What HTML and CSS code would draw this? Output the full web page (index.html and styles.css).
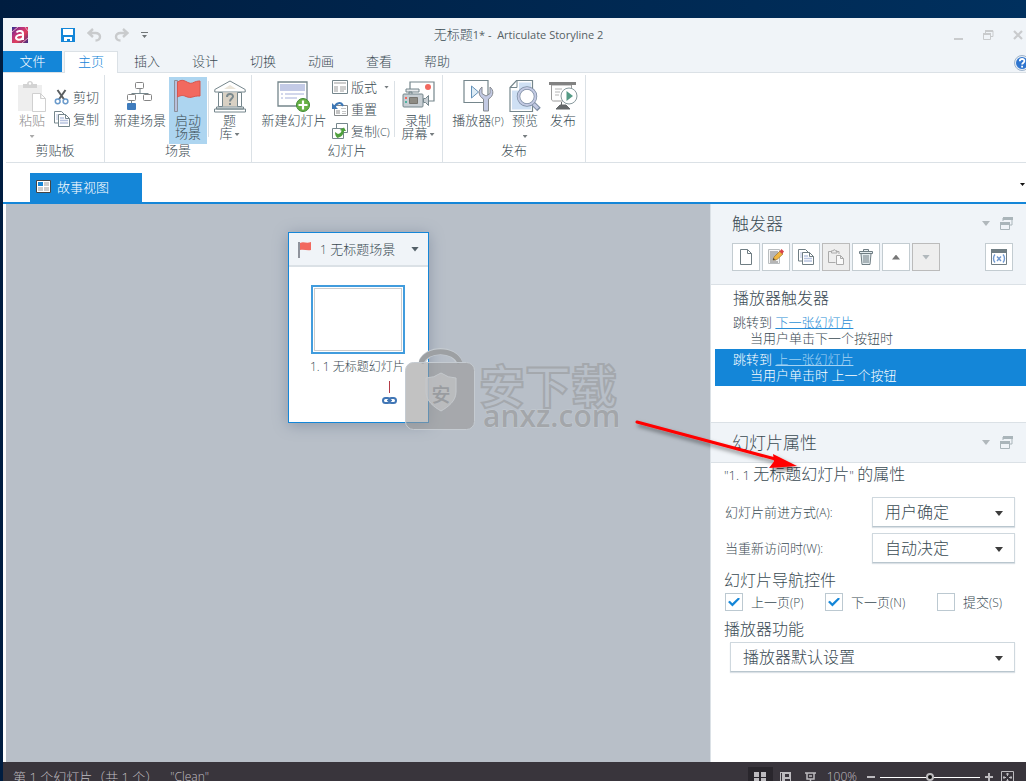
FILE: index.html
```html
<!DOCTYPE html>
<html lang="zh-CN">
<head>
<meta charset="utf-8">
<title>无标题1* - Articulate Storyline 2</title>
<link rel="stylesheet" href="styles.css">
</head>
<body>
<div class="window">
  <header class="titlebar">
    <div class="quick">
      <svg class="logo" width="16" height="16" viewBox="0 0 16 16"><defs><linearGradient id="lg" x1="0" y1="0" x2="1" y2="1"><stop offset="0" stop-color="#2b2f8e"/><stop offset=".3" stop-color="#b5307f"/><stop offset=".6" stop-color="#e0405c"/><stop offset="1" stop-color="#3a2a80"/></linearGradient></defs><rect width="16" height="16" fill="url(#lg)"/><path d="M0 5 6 0M10 16l6-5M13 0l3 4" stroke="#e8a0c0" /><path d="M4.500 5.500C6 3.400 11 3.500 11 6.500V13M11 8C7 7.500 4 8.500 4 10.800S9.500 13.500 11 10.500" fill="none" stroke="#fff" stroke-width="2"/></svg>
      <button class="plain" aria-label="保存"><svg width="14" height="14" viewBox="0 0 14 14"><path d="M0 0h14v14H0z" fill="#1486d8"/><path d="M2 1h10v6H2zM3 9h8v4H9v-2H6v2H3z" fill="#fff"/></svg></button>
      <button class="plain" aria-label="撤销"><svg width="15" height="14" viewBox="0 0 15 14"><path d="M6 1 1.500 5 6 9M2 5h6.500c6 0 6 7.500 0 7.500" fill="none" stroke="#c9cbcd" stroke-width="2.400"/></svg></button>
      <button class="plain" aria-label="恢复"><svg width="15" height="14" viewBox="0 0 15 14"><path d="m9 1 4.500 4L9 9M13 5H6.500c-6 0-6 7.500 0 7.500" fill="none" stroke="#c9cbcd" stroke-width="2.400"/></svg></button>
      <button class="plain" aria-label="自定义"><svg width="7" height="6" viewBox="0 0 7 6"><path d="M0 0h7v1H0zM1 3h5L3.500 6z" fill="#707577"/></svg></button>
    </div>
    <h1 class="title"><span>无标题</span>1* -&nbsp; Articulate Storyline 2</h1>
    <div class="winbtns">
      <button class="plain" aria-label="最小化"><svg width="10" height="10" viewBox="0 0 10 10"><path d="M0 8h9v2H0z" fill="#c9cbcd"/></svg></button>
      <button class="plain" aria-label="还原"><svg width="11" height="10" viewBox="0 0 11 10"><path d="M2.500 3V.8h7.500v5.700H8M.5 4h7v5.500h-7z" fill="none" stroke="#c9cbcd"/><path d="M2 0h8v2H2zM0 3h8v2H0z" fill="#c9cbcd"/></svg></button>
      <button class="plain" aria-label="关闭"><svg width="10" height="10" viewBox="0 0 10 10"><path d="m1 1 8 8M9 1 1 9" stroke="#c9cbcd" stroke-width="2.200"/></svg></button>
    </div>
  </header>

  <nav class="tabs">
    <button class="tab file">文件</button>
    <button class="tab active">主页</button>
    <button class="tab">插入</button>
    <button class="tab">设计</button>
    <button class="tab">切换</button>
    <button class="tab">动画</button>
    <button class="tab">查看</button>
    <button class="tab">帮助</button>
    <button class="plain help" aria-label="联机帮助"><svg width="16" height="16" viewBox="0 0 16 16"><circle cx="8" cy="8" r="7.500" fill="#e8eef5" stroke="#9db3cb"/><circle cx="8" cy="8" r="6" fill="#2f75cf"/><path d="M5.800 6.300c0-3 4.600-3 4.600-.3 0 1.700-2.300 1.700-2.300 3.600M8.100 10.800v1.700" fill="none" stroke="#fff" stroke-width="1.800"/></svg></button>
  </nav>

  <section class="ribbon">
    <div class="group">
      <div class="tools">
        <button class="big off w-paste"><svg width="30" height="32" viewBox="0 0 30 32"><path d="M1 5h24v26H1z" fill="#eee"/><path d="M6 4h4c0-4 6-4 6 0h4v4H6z" fill="#d3d3d3"/><circle cx="13" cy="3.500" r="1.200" fill="#fff"/><path d="M15.500 13.500h8l5 5v13h-13zM23.500 13.500v5h5" fill="#fff" stroke="#d0d0d0"/></svg><span>粘贴</span><i class="caret"></i></button>
        <div class="stack clip">
          <button class="small"><svg width="16" height="16" viewBox="0 0 16 16"><path d="m3.500 1 7 10M11.500 1l-7 10" stroke="#5b5f61" stroke-width="2"/><circle cx="3.700" cy="12.300" r="2.400" fill="#fff" stroke="#6a9acb" stroke-width="1.500"/><circle cx="11.500" cy="12.300" r="2.400" fill="#fff" stroke="#6a9acb" stroke-width="1.500"/></svg>剪切</button>
          <button class="small"><svg width="16" height="16" viewBox="0 0 16 16"><path d="M.5.5h7l3 3V12H.5z" fill="#fff" stroke="#75868c"/><path d="M2 4h3M2 6h3M2 8h3" stroke="#b8c3e0"/><path d="M4.500 3.500h7l4 4v8h-11z" fill="#fff" stroke="#75868c"/><path d="M6 7h4M6 9.500h8M6 12h8" stroke="#b8c3e0" stroke-width="1.400"/><path d="M11.500 3.500v4h4" fill="none" stroke="#75868c"/></svg>复制</button>
        </div>
      </div>
      <h2>剪贴板</h2>
    </div>
    <div class="group">
      <div class="tools">
        <button class="big w-newscene"><svg width="26" height="30" viewBox="0 0 26 30"><path d="M13 8v4.500M5 12.500h16M5 12v2M21 12v2" fill="none" stroke="#75868c"/><rect x="8.500" y="1.500" width="8" height="6" rx="1" fill="#fff" stroke="#858585"/><rect x=".5" y="13.500" width="8" height="6" rx="1" fill="#fff" stroke="#858585"/><rect x="16.500" y="13.500" width="8" height="6" rx="1" fill="#fff" stroke="#858585"/><path d="M4.500 20v3" stroke="#75868c"/><rect y="22" width="9" height="7" rx="1" fill="#3f7cbd"/></svg><span>新建场景</span></button>
        <button class="big on w-start"><svg width="28" height="34" viewBox="0 0 28 34"><path d="M.5 1.500h3v31h-3z" fill="#b8bfdb" stroke="#8b8f99"/><path d="M3.500 3c7-5 10 3 15 1 3-1.500 5-2 7.500-2v15c-7-.5-8 3-14 .5-4-2-6-.5-8.500.5z" fill="#f2695f" stroke="#d8564d"/></svg><span>启动<br>场景</span></button>
        <i class="sep"></i>
        <button class="big w-bank"><svg width="32" height="33" viewBox="0 0 32 33"><path d="M.8 12.500V10L16 1.500 31.200 10v2.500z" fill="#fff" stroke="#75868c"/><path d="m10 9.500 6-4 6 4z" fill="#ece6da"/><path d="M9 13h14v14H9z" fill="#d9d1c4"/><path d="M4.500 13h4v14h-4zM23.500 13h4v14h-4z" fill="#fff" stroke="#75868c"/><path d="M2.500 27.500h27v2h-27zM.5 29.500h31v3H.5z" fill="#fff" stroke="#75868c"/><path d="M13 17.500c0-4 6-4 6-.5 0 2-3 2-3 5M16 23.500v2" fill="none" stroke="#7b898e" stroke-width="2"/></svg><span>题<br>库<i class="caret inline"></i></span></button>
      </div>
      <h2>场景</h2>
    </div>
    <div class="group">
      <div class="tools">
        <button class="big w-newslide"><svg width="34" height="32" viewBox="0 0 34 32"><path d="M1 2h29v24H1z" fill="#fff" stroke="#75868c" stroke-width="1.300"/><path d="M3 4h25v7H3z" fill="#c3cae6"/><path d="M4 14h2M4 18h2M8 14h19M8 18h12" stroke="#c3cae6" stroke-width="1.500"/><circle cx="26" cy="25" r="6.500" fill="#68b145" stroke="#3f8a32"/><path d="M26 20.500v9M21.500 25h9" stroke="#fff" stroke-width="2.200"/></svg><span>新建幻灯片</span></button>
        <div class="stack three">
          <button class="small"><svg width="16" height="16" viewBox="0 0 16 16"><path d="M.5 1.500h15v13H.5z" fill="#fff" stroke="#75868c"/><path d="M2 3h12v2H2zM2 7h4v6H2z" fill="#cdcdcd"/><path d="M8 8h6M8 10h6M8 12h4" stroke="#a0a0a0"/></svg>版式<i class="caret"></i></button>
          <button class="small"><svg width="16" height="16" viewBox="0 0 16 16"><path d="M2.500 4.500h13v10h-13z" fill="#fff" stroke="#85898b"/><path d="M4 9h4v4H4zM9 7h5v1H9zM10 10h4v1h-4zM10 12h4v1h-4z" fill="#c4c4c4"/><path d="M2.500 6.500C4 1.500 9 .5 11 5" fill="none" stroke="#3e78b6" stroke-width="2"/><path d="M0 2v6h6z" fill="#3e78b6"/></svg>重置</button>
          <button class="small"><svg width="16" height="16" viewBox="0 0 16 16"><path d="M4.500.5h11v9h-11z" fill="#fff" stroke="#75868c"/><path d="M.500 5.500h11v10H.5z" fill="#fff" stroke="#75868c"/><path d="M3 9c0 3 1 5 2.500 6C9 14 11.500 12 12 8h2l-2-3.500L7.500 7l2 .5c0 2-1.500 3-3.500 3.500z" fill="#4fa03d"/></svg><span>复制<small>(C)</small></span></button>
        </div>
        <i class="sep"></i>
        <button class="big w-record"><svg width="33" height="32" viewBox="0 0 33 32"><path d="M8 2h24v19H8z" fill="#fff" stroke="#75868c" stroke-width="1.200"/><circle cx="26" cy="7" r="3" fill="#f2695f"/><path d="M4 9h13v3H4zM7 12h3v3H7z" fill="#e8eaec" stroke="#75868c"/><rect x="1" y="14" width="20" height="13" rx="1" fill="#c7ced3" stroke="#75868c"/><path d="M7.500 17.500h8v6h-8z" fill="#8d8b84" stroke="#77756f"/><path d="M3 17h2v2H3z" fill="#f2695f"/><path d="M3 21h2v2H3z" fill="#4fb3a0"/><path d="M21.500 18.500h2l3-3v10l-3-3h-2z" fill="#c7ced3" stroke="#75868c"/></svg><span>录制<br>屏幕<i class="caret inline"></i></span></button>
      </div>
      <h2>幻灯片</h2>
    </div>
    <div class="group">
      <div class="tools">
        <button class="big w-player"><svg width="31" height="33" viewBox="0 0 31 33"><path d="M1 1h24v22H1z" fill="#fff" stroke="#75868c" stroke-width="1.200"/><path d="M8.500 6.500v12l7-6z" fill="#dcebf5" stroke="#6391b9"/><path d="M19 7.500c-4 3-4 9 1.500 12v12h5v-12c5.500-3 5.500-9 1.500-12v6.500l-4 2.500-4-2.500z" fill="#c3cae3" stroke="#85898f"/></svg><span>播放器<small>(P)</small></span></button>
        <button class="big w-preview"><svg width="32" height="33" viewBox="0 0 32 33"><path d="M7.500 1h16v31H1V8z" fill="#fff" stroke="#75868c" stroke-width="1.200"/><path d="M10 3h12v27H3V11h7z" fill="#cfe0f4"/><path d="M8 1v7H1" fill="none" stroke="#75868c"/><path d="m23 23 7 7" stroke="#7d8da3" stroke-width="5"/><path d="m23 23 6 6" stroke="#c3cae3" stroke-width="3"/><circle cx="18" cy="17" r="8.500" fill="#fff" stroke="#7d8da3" stroke-width="3.500"/><circle cx="18" cy="17" r="8.500" fill="none" stroke="#c3cae3" stroke-width="2"/></svg><span>预览</span><i class="caret"></i></button>
        <button class="big w-publish"><svg width="30" height="32" viewBox="0 0 30 32"><path d="M3.500 5v14c0 2 2 2 2 2h18V5z" fill="#fff" stroke="#9a9a9a"/><path d="M1 2h27v3H1z" fill="#828282"/><path d="M7 9h7M7 12h5M7 15h4" stroke="#b5b5b5"/><path d="M13.500 22v3M8 29h14l-4-4h-6z" fill="#65696b" stroke="#65696b"/><circle cx="21" cy="16" r="8" fill="#fff" stroke="#88999d"/><path d="M18.500 11v10l6.500-5z" fill="#559b86"/></svg><span>发布</span></button>
      </div>
      <h2>发布</h2>
    </div>
  </section>

  <div class="docbar">
    <button class="doctab"><svg width="15" height="13" viewBox="0 0 15 13"><path d="M.5.5h14v12H.5z" fill="#fff" stroke="#444"/><path d="M2 2h5v4H2z" fill="#1486d8"/><path d="M8 2h5v4H8zM2 7h5v4H2zM8 7h5v4H8z" fill="#ccc"/></svg>故事视图</button>
    <button class="plain more" aria-label="更多视图"><i class="caret dark"></i></button>
  </div>

  <main class="main">
    <section class="canvas">
      <article class="scene">
        <header class="scene-head">
          <svg width="14" height="17" viewBox="0 0 14 17"><path d="M1 1v16" stroke="#8f939c" stroke-width="2"/><path d="M2 2c4-2 6 1 11-1v8c-4 1-7-1-11 0z" fill="#f2695f"/></svg>
          <span><small>1</small> 无标题场景</span>
          <button class="plain" aria-label="场景菜单"><i class="caret large"></i></button>
        </header>
        <div class="thumb"></div>
        <p class="thumb-name">1. 1 无标题幻灯片</p>
        <svg class="link" width="15" height="25" viewBox="0 0 15 25"><path d="M7.500 0v12" stroke="#b53c48"/><rect x="1" y="17" width="7" height="5" rx="2.500" fill="none" stroke="#4076b5" stroke-width="2"/><rect x="7" y="17" width="7" height="5" rx="2.500" fill="none" stroke="#4076b5" stroke-width="2"/><path d="M5 19.500h5" stroke="#4076b5" stroke-width="1.500"/></svg>
      </article>
    </section>

    <aside class="panel">
      <header class="panel-head">
        <div class="panel-title"><h2>触发器</h2><i class="caret large pale"></i><svg width="13" height="13" viewBox="0 0 13 13"><path d="M3 4V1h9v7H9" fill="none" stroke="#aab5ba"/><path d="M3 0h10v3H3zM0 5h10v3H0z" fill="#aab5ba"/><path d="M.5 5.500h9v7h-9z" fill="none" stroke="#aab5ba"/></svg></div>
        <div class="bar">
          <button class="tool" aria-label="新建触发器"><svg width="14" height="16" viewBox="0 0 14 16"><path d="M1.500.5h7l4 4v11h-11zM8.500.5v4h4" fill="#fff" stroke="#6f7d83"/></svg></button>
          <button class="tool" aria-label="编辑触发器"><svg width="16" height="16" viewBox="0 0 16 16"><path d="M.5.5h11v14H.5z" fill="#f5f5f5" stroke="#b9bdbf"/><path d="M2 3h8M2 5h8M2 7h6M2 9h4M2 11h6M2 13h8" stroke="#777"/><path d="m5 11 1-3 6-6 3 3-6 5.500z" fill="#f0b640" stroke="#9f7830" stroke-width=".7"/><path d="m11.500 2.500 2-2.500L16 2.500 14 5z" fill="#d8434a"/><path d="m5 11 .5-2L7 10.500z" fill="#333"/></svg></button>
          <button class="tool" aria-label="复制触发器"><svg width="16" height="16" viewBox="0 0 16 16"><path d="M.5.5h7l3 3V12H.5z" fill="#fff" stroke="#6f7d83"/><path d="M2 4h3M2 6h3M2 8h3" stroke="#b8c3e0"/><path d="M4.500 3.500h7l4 4v8h-11z" fill="#fff" stroke="#6f7d83"/><path d="M6 7h4M6 9.500h8M6 12h8" stroke="#b8c3e0" stroke-width="1.400"/><path d="M11.500 3.500v4h4" fill="none" stroke="#6f7d83"/></svg></button>
          <button class="tool off" aria-label="粘贴触发器"><svg width="16" height="16" viewBox="0 0 16 16"><path d="M3 2.500H.5v11h7M8 2.500h3V5M3.500 4V1.800h1.800c0-1.600 2-1.600 2 0H9V4z" fill="none" stroke="#aaa"/><path d="M8.500 6.500h4l3 3v6h-7zM12.500 6.500v3h3" fill="#fafafa" stroke="#aaa"/></svg></button>
          <button class="tool" aria-label="删除触发器"><svg width="14" height="16" viewBox="0 0 14 16"><path d="M4.500 2V.5h5V2M.500 2.500h13v2H.5zM2 5l1 10.500h8L12 5" fill="#e4ecef" stroke="#6f7d83"/><path d="M5 6v8M7 6v8M9 6v8" stroke="#6f7d83"/></svg></button>
          <button class="tool" aria-label="上移"><i class="caret large up"></i></button>
          <button class="tool off" aria-label="下移"><i class="caret large pale"></i></button>
          <button class="tool vars" aria-label="变量"><svg width="16" height="16" viewBox="0 0 16 16"><path d="M.5.5h15v15H.5z" fill="#fff" stroke="#6f7d83"/><path d="M0 0h16v4H0z" fill="#6f7d83"/><path d="M4 5.500c-2 2-2 6 0 8M12 5.500c2 2 2 6 0 8M6 7.500l4 4.500M10 7.500 6 12" fill="none" stroke="#6f98d0" stroke-width="1.400"/></svg></button>
        </div>
      </header>
      <div class="triggers">
        <h3>播放器触发器</h3>
        <div class="trigger"><div>跳转到 <a href="#next">下一张幻灯片</a></div><div class="when">当用户单击下一个按钮时</div></div>
        <div class="trigger selected"><div>跳转到 <a href="#prev">上一张幻灯片</a></div><div class="when">当用户单击时 上一个按钮</div></div>
      </div>
      <header class="panel-head second">
        <div class="panel-title"><h2>幻灯片属性</h2><i class="caret large pale"></i><svg width="13" height="13" viewBox="0 0 13 13"><path d="M3 4V1h9v7H9" fill="none" stroke="#aab5ba"/><path d="M3 0h10v3H3zM0 5h10v3H0z" fill="#aab5ba"/><path d="M.5 5.500h9v7h-9z" fill="none" stroke="#aab5ba"/></svg></div>
      </header>
      <form class="props">
        <h3 class="props-title"><small>"1. 1 </small>无标题幻灯片<small>" </small>的属性</h3>
        <div class="field"><label for="advance">幻灯片前进方式<small>(A):</small></label><span class="pick"><select id="advance"><option>用户确定</option></select></span></div>
        <div class="field"><label for="revisit">当重新访问时<small>(W):</small></label><span class="pick"><select id="revisit"><option>自动决定</option></select></span></div>
        <h3>幻灯片导航控件</h3>
        <div class="checks">
          <label><input type="checkbox" checked><span>上一页<small>(P)</small></span></label>
          <label><input type="checkbox" checked><span>下一页<small>(N)</small></span></label>
          <label><input type="checkbox"><span>提交<small>(S)</small></span></label>
        </div>
        <h3><label for="features">播放器功能</label></h3>
        <span class="pick wide"><select id="features"><option>播放器默认设置</option></select></span>
      </form>
    </aside>

    <svg class="overlay" width="820" height="290" viewBox="0 0 820 290">
      <defs><filter id="sh" x="-10%" y="-30%" width="120%" height="170%"><feDropShadow dx="2" dy="3" stdDeviation="2" flood-opacity=".5"/></filter></defs>
      <g>
        <path d="M419 158c6-14 31-14 37 0" transform="translate(0 0)" fill="none" stroke="#c5cbd1" stroke-width="7"/>
        <path d="M418 159c5-15 34-15 39 0" fill="none" stroke="#9da0a3" stroke-width="5"/>
        <rect x="402.500" y="158.500" width="69" height="67" rx="8" fill="#999" fill-opacity=".6" stroke="#c5cbd1"/>
        <path d="M423 174q8 0 15-5 7 5 15 5v14c0 9-8 15-15 19-7-4-15-10-15-19z" fill="#bfc1c3" fill-opacity=".8" stroke="#c5c9cd"/>
        <text class="mark-seal" x="438" y="198" text-anchor="middle">安</text>
        <text class="mark-name" x="476" y="199">安下载</text>
        <text class="mark-site" x="480" y="223">anxz.com</text>
      </g>
      <g filter="url(#sh)"><path d="m634 218 142 38" stroke="#f00" stroke-width="3" stroke-linecap="round"/><path d="m794 262-28 2 5-6.500-1-7.500z" fill="#f00"/></g>
    </svg>
  </main>

  <footer class="status">
    <span class="count">第 1 个幻灯片（共 1 个）</span><span class="theme">"Clean"</span>
    <button class="view current" aria-label="故事视图"><svg width="12" height="11" viewBox="0 0 12 11"><path d="M0 0h5v5H0zM7 0h5v5H7zM0 6h5v5H0zM7 6h5v5H7z" fill="#bdbbbf"/></svg></button>
    <button class="view" aria-label="幻灯片视图"><svg width="11" height="11" viewBox="0 0 11 11"><path d="M0 0h11v11H0z" fill="#bdbbbf"/><path d="M1 1h1v9H1zM5 2h4v3H5zM5 7h5v3H5z" fill="#39353c"/></svg></button>
    <button class="view" aria-label="预览"><svg width="11" height="11" viewBox="0 0 11 11"><path d="M0 1h11M2 1v6h7V1M4 4h3M5.500 7v2M3 10h5" fill="none" stroke="#bdbbbf" stroke-width="1.500"/></svg></button>
    <span class="zoom">100%</span>
    <button class="plain" aria-label="缩小"><svg width="8" height="8" viewBox="0 0 8 8"><path d="M0 3h8v2H0z" fill="#bdbbbf"/></svg></button>
    <input class="slider" type="range" min="0" max="200" value="100" aria-label="缩放">
    <button class="plain" aria-label="放大"><svg width="8" height="8" viewBox="0 0 8 8"><path d="M0 3h8v2H0zM3 0h2v8H3z" fill="#bdbbbf"/></svg></button>
    <button class="plain fit" aria-label="适合窗口"><svg width="13" height="13" viewBox="0 0 13 13"><path d="M.5.5h12v12H.5z" fill="none" stroke="#bdbbbf"/><path d="M6.500 2v9M2 6.500h9" stroke="#bdbbbf" stroke-dasharray="3 3"/><path d="M5 3h3M5 10h3M3 5v3M10 5v3" stroke="#bdbbbf"/></svg></button>
  </footer>
</div>
</body>
</html>
```

FILE: styles.css
```css
* { box-sizing: border-box; }
html { height: 100%; }
body {
  margin: 0; height: 100vh; padding: 18px 0 0 3px; overflow: hidden;
  background: linear-gradient(90deg, #001d40, #00305e) #001d40;
  font: 300 13px/16px "Open Sans", "Noto Sans CJK SC", sans-serif;
  color: #3a4b53;
}
h1, h2, h3, p { margin: 0; font-weight: inherit; }
button, select, input { font: inherit; color: inherit; margin: 0; }
button { padding: 0; border: 0; background: none; white-space: nowrap; }
svg { display: block; flex: none; }
small { font-size: 12px; }
.plain { display: flex; align-items: center; justify-content: center; }

/* The status bar continues below the visible desktop. */
.window { height: calc(100vh - 7px); display: flex; flex-direction: column; background: #fff; overflow: hidden; }

.titlebar { display: grid; grid-template-columns: 1fr auto 1fr; align-items: center; flex: none; height: 33px; padding-left: 8px; background: #f0f4f8; }
.quick { display: flex; align-items: center; gap: 12px; }
.quick .logo { margin: 0 21px 0 1px; }
.title { font-size: 11px; font-weight: 400; color: #555f64; }
.title span { font-size: 13px; font-weight: 300; color: #3a4b53; }
.winbtns { display: flex; justify-content: flex-end; gap: 19px; padding-right: 3px; }

.tabs { display: flex; flex: none; height: 22px; background: #f0f4f8; box-shadow: inset 0 -1px #dbe1e6; }
.tab { width: 58px; height: 21px; line-height: 18px; padding-bottom: 2px; }
.tab.file { width: 59px; margin-right: 2px; background: #1486d8; color: #fff; }
.tab.active { width: 54px; height: 22px; padding-bottom: 3px; background: #fff; color: #1486d8; border: 1px solid #dbe1e6; border-bottom: 0; }
.help { margin: 2px -4px 0 auto; }

.ribbon { display: flex; flex: none; height: 90px; margin-left: 3px; border-bottom: 1px solid #dbe1e6; }
.group { display: flex; flex-direction: column; height: 87px; margin-top: 2px; border-right: 1px solid #dbe1e6; }
.group h2 { font-size: 13px; line-height: 16px; text-align: center; }
.tools { display: flex; height: 67px; padding: 2px 2px 0; }
.big { display: flex; flex-direction: column; align-items: center; flex: none; height: 67px; line-height: 13px; }
.big > svg { margin: 2px 0 1px; height: 34px; }
.big > .caret { margin-top: 8px; }
.big small { font-size: 11px; }
.off { color: #8e8e8e; }
.off .caret { background: #aaa; }
.on { background: #add5f0; }
.sep { width: 1px; height: 56px; margin: 4px 1px 0; background: #dbe1e6; }
.w-paste { width: 46px; padding-left: 2px; }
.w-newscene { width: 62px; padding-left: 4px; }
.w-start { width: 38px; }
.w-bank { width: 39px; }
.w-newslide { width: 78px; padding-left: 2px; }
.w-record { width: 44px; }
.w-player { width: 62px; padding-left: 4px; }
.w-preview { width: 36px; }
.w-publish { width: 40px; }
.stack { display: flex; flex-direction: column; }
.clip { padding: 9px 3px 0 0; }
.three { width: 61px; }
.three, .clip { margin-top: -1px; }
.clip { padding-top: 10px; }
.small { display: flex; align-items: center; gap: 3px; height: 22px; }
.small .caret { margin-left: 4px; }
.small small { font-size: 11px; }

.caret { display: inline-block; flex: none; width: 5px; height: 3px; background: #777d80; clip-path: polygon(0 0, 100% 0, 50% 100%); }
.caret.inline { margin: 0 0 2px 2px; }
.caret.large { width: 8px; height: 5px; background: #536068; }
.caret.dark { background: #111; }
.caret.large.pale { background: #b1b8bc; }
.caret.large.up { background: #777; clip-path: polygon(50% 0, 100% 100%, 0 100%); }

.docbar { display: flex; align-items: flex-end; flex: none; height: 41px; padding-left: 27px; border-bottom: 2px solid #1486d8; }
.doctab { display: flex; align-items: center; gap: 6px; width: 112px; height: 29px; padding: 0 0 2px 6px; background: #1486d8; color: #fff; }
.more { margin: 0 1px 16px auto; }

.main { position: relative; display: flex; flex: 1; min-height: 0; }
.canvas { flex: 1; margin-left: 3px; padding: 28px 0 0 282px; background: #b8bfc8; }
.scene { width: 141px; height: 191px; border: 1px solid #1486d8; background: #fff; box-shadow: 0 2px 14px #8d98a8; }
.scene-head { display: flex; align-items: center; height: 34px; padding: 0 9px; gap: 8px; background: #f0f4f8; border-bottom: 2px solid #dbe1e6; white-space: nowrap; }
.scene-head .plain { margin-left: auto; }
.thumb { width: 94px; height: 69px; margin: 18px 0 0 22px; border: 2px solid #419cdd; box-shadow: inset 0 0 0 1px #fff, inset 0 0 0 2px #ccc; }
.thumb-name { margin: 5px 0 0 21px; font-size: 12px; white-space: nowrap; }
.link { margin: 6px 0 0 93px; }
.overlay { position: absolute; left: 0; top: 0; pointer-events: none; }
.mark-seal { font: 500 19px "Noto Sans CJK SC", sans-serif; fill: #999ca0; }
.mark-name { font: 700 46px "Noto Sans CJK SC", sans-serif; fill: #b8bfc8; stroke: #a4a8ad; stroke-width: 2px; }
.mark-site { font: 600 30px "Open Sans", sans-serif; fill: #a3a6aa; stroke: #c5cbd1; stroke-width: 1px; paint-order: stroke; }

.panel { flex: 0 0 316px; border-left: 1px solid #dbe1e6; background: #fff; }
.panel-head { padding: 0 13px 13px 21px; background: #f0f4f8; border-bottom: 1px solid #dbe1e6; }
.panel-head.second { padding-bottom: 0; border-top: 1px solid #dbe1e6; }
.panel-title { display: flex; align-items: center; gap: 10px; height: 39px; }
.panel-title h2 { flex: 1; font-size: 17px; line-height: 24px; }
.bar { display: flex; gap: 2px; }
.tool { display: flex; align-items: center; justify-content: center; width: 28px; height: 28px; border: 1px solid #c3ccd1; background: #fff; }
.tool.off { background: #eee; border-color: #bbb; }
.vars { margin-left: auto; }

.triggers { height: 137px; padding-left: 4px; }
h3 { font-size: 16px; line-height: 22px; }
.triggers h3 { height: 27px; padding-left: 18px; line-height: 27px; }
.trigger { height: 37px; padding: 2px 0 0 18px; }
.trigger a { color: #2c8ed6; }
.when { padding-left: 17px; }
.trigger.selected { background: #1486d8; color: #fff; }
.trigger.selected a { color: #a5d3f3; }

.props { padding: 0 11px 0 13px; }
.props-title { margin: 0 0 11px; }
.props-title small { font-size: 13px; }
.field { display: flex; align-items: center; justify-content: space-between; margin-bottom: 6px; padding-left: 1px; }
.pick { position: relative; display: block; width: 143px; }
.pick::after { content: ""; position: absolute; right: 12px; top: 14px; width: 8px; height: 5px; background: #3c3c3c; clip-path: polygon(0 0, 100% 0, 50% 100%); pointer-events: none; }
.pick select { display: block; appearance: none; width: 100%; height: 30px; padding: 0 12px 1px; border: 1px solid #cfd8de; border-bottom-color: #b9c6ce; border-radius: 0; background: #fff; font-size: 16px; box-shadow: 0 1px 1px #dbe1e6; }
.pick.wide { width: auto; margin: 2px 0 0 6px; }
.checks { display: grid; grid-template-columns: 100px 112px 1fr; height: 27px; padding: 2px 0 0 1px; }
.checks label { display: flex; align-items: flex-start; gap: 8px; white-space: nowrap; }
.checks input { appearance: none; display: grid; place-items: center; flex: none; width: 18px; height: 18px; border: 1px solid #bcc9d1; background: #fff; }
.checks input:checked::after { content: ""; width: 12px; height: 9px; background: #1486d8; clip-path: polygon(0 50%, 15% 35%, 36% 65%, 86% 0, 100% 15%, 37% 100%); }
.checks span { line-height: 18px; }

.status { display: flex; align-items: center; flex: none; height: 30px; padding: 0 12px 0 10px; background: #39353c; color: #c0bec2; }
.count { white-space: nowrap; }
.theme { margin: 0 auto 0 12px; font-size: 12px; }
.view { display: flex; align-items: center; justify-content: center; width: 25px; height: 20px; }
.view.current { background: #29262c; }
.zoom { margin: 0 10px 0 4px; font-size: 12px; }
.slider { appearance: none; width: 100px; height: 12px; margin: 0 5px; background: linear-gradient(#fff, #fff) center / 100% 1px no-repeat; }
.slider::-webkit-slider-thumb { appearance: none; width: 8px; height: 8px; border: 2px solid #bdbbbf; border-radius: 50%; background: #111; }
.fit { margin-left: 8px; }
```
